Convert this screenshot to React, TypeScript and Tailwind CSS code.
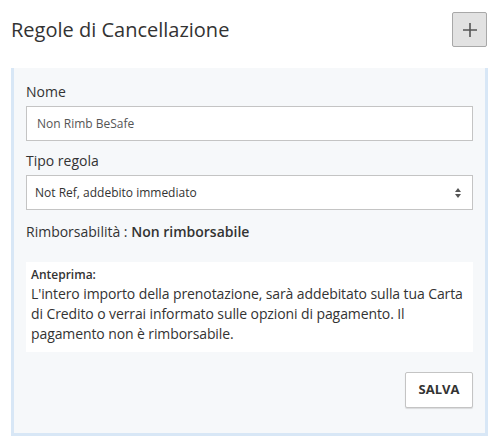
export default function App() {
  return (
    <div
      className="w-[493px] h-[438px] bg-white text-[#333] overflow-hidden"
      style={{ fontFamily: '"Open Sans", sans-serif' }}
    >
      {/* Header */}
      <div className="flex justify-between pl-[11px] pr-[6px] pt-[12px] h-[68px] items-start">
        <h1 className="text-[20px] leading-[35px] font-normal text-[#333]">
          Regole di Cancellazione
        </h1>
        <button className="w-[35px] h-[35px] flex items-center justify-center bg-[#e2e2e2] border border-[#a8a8a8] rounded-[2px]">
          <svg width="18" height="18" viewBox="0 0 18 18">
            <path d="M9 2v14M2 9h14" stroke="#555" strokeWidth="1.6" />
          </svg>
        </button>
      </div>

      {/* Panel */}
      <div className="mx-[11px] w-[477px] h-[368px] bg-[#f6f8fa] border-x-[3px] border-b-[3px] border-[#d8e7f6] px-[12px] pt-[14px]">
        <label className="block text-[14px] leading-[20px] mb-[4px]">Nome</label>
        <div className="h-[35px] bg-white border border-[#c4c4c4] flex items-center px-[10px] text-[12px] text-[#555]">
          Non Rimb BeSafe
        </div>

        <label className="block text-[14px] leading-[20px] mt-[10px] mb-[4px]">Tipo regola</label>
        <div className="h-[35px] bg-white border border-[#c4c4c4] flex items-center justify-between pl-[8px] pr-[10px] text-[12px] text-[#333]">
          <span>Not Ref, addebito immediato</span>
          <svg width="8" height="12" viewBox="0 0 8 12">
            <path d="M4 1L7 5H1z" fill="#555" />
            <path d="M4 11L7 7H1z" fill="#555" />
          </svg>
        </div>

        <p className="text-[14px] leading-[20px] mt-[12px]">
          Rimborsabilità : <span className="font-semibold">Non rimborsabile</span>
        </p>

        <div className="mt-[20px] bg-white h-[90px] pl-[5px] pr-0 pt-[4px]">
          <div className="text-[12px] leading-[18px] font-semibold">Anteprima:</div>
          <p className="text-[14px] leading-[20px] tracking-[-0.1px]">
            L'intero importo della prenotazione, sarà addebitato sulla tua Carta di Credito o verrai informato sulle opzioni di pagamento. Il pagamento non è rimborsabile.
          </p>
        </div>

        <div className="flex justify-end mt-[20px]">
          <button className="w-[68px] h-[36px] bg-white border border-[#c4c4c4] rounded-[2px] shadow-[0_1px_1px_rgba(0,0,0,0.12)] text-[13px] font-bold text-[#333]">
            SALVA
          </button>
        </div>
      </div>
    </div>
  );
}
